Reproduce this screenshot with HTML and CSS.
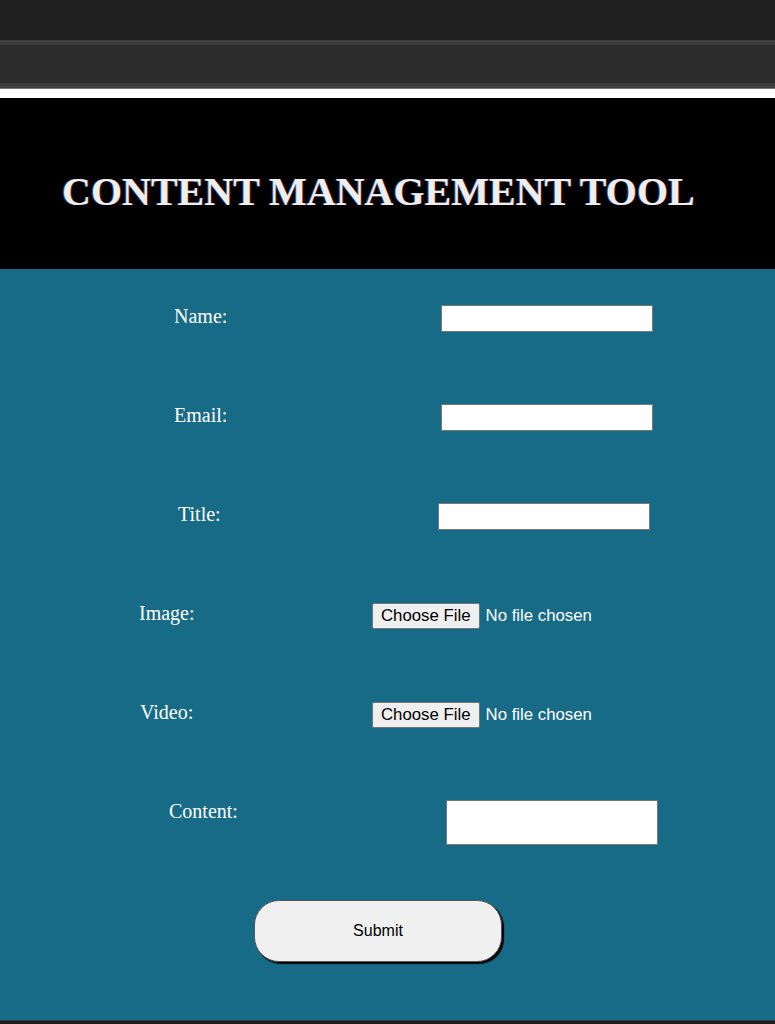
FILE: index.html
```html
<!DOCTYPE html>
<html>
<head>
<meta charset="utf-8">
<link rel="stylesheet" href="styles.css">
</head>
<body>
<div class="chrome-top"></div>
<div class="chrome-bar"></div>
<div class="gap"></div>
<header class="header">
  <h1 class="title">CONTENT MANAGEMENT TOOL</h1>
</header>
<main class="form-area">
  <form class="form">
    <div class="row row-name">
      <label class="label">Name:</label>
      <input class="text-input" type="text">
    </div>
    <div class="row row-email">
      <label class="label">Email:</label>
      <input class="text-input" type="text">
    </div>
    <div class="row row-title">
      <label class="label">Title:</label>
      <input class="text-input" type="text">
    </div>
    <div class="row row-image">
      <label class="label">Image:</label>
      <input class="file-input" type="file">
    </div>
    <div class="row row-video">
      <label class="label">Video:</label>
      <input class="file-input" type="file">
    </div>
    <div class="row row-content">
      <label class="label">Content:</label>
      <textarea class="textarea"></textarea>
    </div>
    <div class="submit-row">
      <button class="submit" type="button">Submit</button>
    </div>
  </form>
</main>
<div class="bottom"></div>
</body>
</html>
```
FILE: styles.css
```css
html, body {
  margin: 0;
  padding: 0;
  background: #176b87;
}
.chrome-top {
  height: 40px;
  background: #202020;
}
.chrome-bar {
  height: 38px;
  background: #2c2c2c;
  border-top: 5px solid #3c3c3c;
  border-bottom: 5px solid #3c3c3c;
}
.gap {
  height: 9px;
  background: #fff;
  border-top: 1px solid #777;
}
.header {
  height: 171px;
  background: #000;
  display: flex;
  align-items: center;
  padding-left: 62px;
}
.title {
  margin: 0;
  margin-top: 16px;
  font-family: "Liberation Serif", serif;
  font-weight: bold;
  font-size: 40px;
  color: #eeeeee;
  letter-spacing: 0;
  text-shadow: -1px 0 0 rgba(80,160,255,0.5), 1px 0 0 rgba(255,60,60,0.35);
}
.form-area {
  height: 751px;
  background: #176b87;
}
.form {
  margin: 0;
  padding-top: 36px;
}
.row {
  height: 99px;
  display: flex;
  align-items: flex-start;
}
.label {
  font-family: "Liberation Serif", serif;
  font-size: 20px;
  color: #fff;
  line-height: 22px;
  margin-top: 0;
}
.text-input {
  box-sizing: border-box;
  width: 212px;
  height: 27px;
  border: 1px solid #767676;
  background: #fff;
  margin: 0;
  padding: 0 2px;
}
.row-name .label, .row-email .label { margin-left: 174px; width: 267px; }
.row-title .label { margin-left: 178px; width: 260px; }
.row-image .label { margin-left: 139px; width: 233px; }
.row-video .label { margin-left: 140px; width: 232px; }
.row-content .label { margin-left: 169px; width: 277px; }
.file-input {
  font-family: "Liberation Sans", Arial, sans-serif;
  font-size: 16.8px;
  color: #fff;
  margin: 0;
  height: 26px;
  margin-top: 1px;
}
.file-input::file-selector-button {
  font-family: "Liberation Sans", Arial, sans-serif;
  font-size: 16.8px;
  color: #000;
  background: #efefef;
  border: 1px solid #767676;
  border-radius: 2px;
  padding: 1px 8px 1px 8px;
  margin-right: 6px;
  height: 26px;
}
.textarea {
  box-sizing: border-box;
  width: 212px;
  height: 45px;
  border: 1px solid #767676;
  background: #fff;
  margin: 0;
  resize: none;
}
.row-content { height: 100px; }
.submit-row {
  display: flex;
  padding-left: 254px;
}
.submit {
  width: 248px;
  height: 62px;
  border-radius: 25px;
  background: #f0f0f0;
  border: 1px solid #555;
  box-shadow: 2px 2px 1px #000;
  font-family: "Liberation Sans", Arial, sans-serif;
  font-size: 16px;
  color: #000;
}
.bottom {
  height: 4px;
  background: #1e1e1e;
  border-top: 1px solid #3a3a3a;
}
```
